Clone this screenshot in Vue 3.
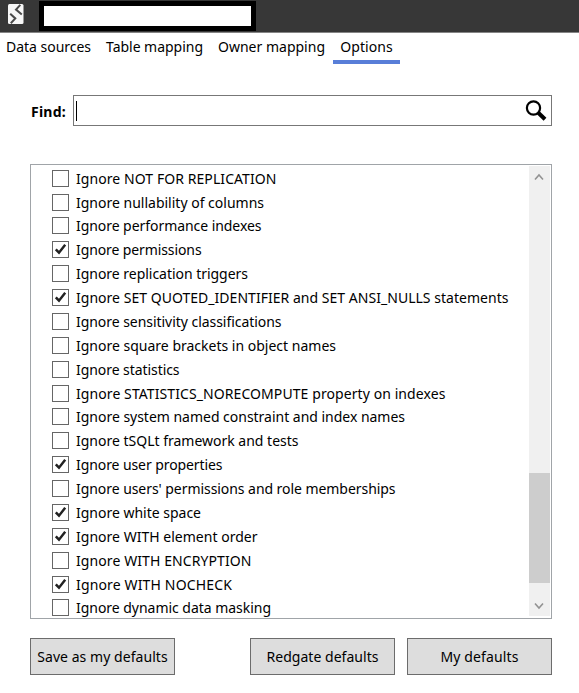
<script setup>
const tabs = [
  { label: 'Data sources', width: 85 },
  { label: 'Table mapping', width: 97 },
  { label: 'Owner mapping', width: 107 },
  { label: 'Options', width: 52.5, active: true },
]
const options = [
  { label: 'Ignore NOT FOR REPLICATION', width: 200.5 },
  { label: 'Ignore nullability of columns', width: 188 },
  { label: 'Ignore performance indexes', width: 185.5 },
  { label: 'Ignore permissions', width: 125.5, checked: true },
  { label: 'Ignore replication triggers', width: 172 },
  { label: 'Ignore SET QUOTED_IDENTIFIER and SET ANSI_NULLS statements', width: 432.5, checked: true },
  { label: 'Ignore sensitivity classifications', width: 205.5 },
  { label: 'Ignore square brackets in object names', width: 260 },
  { label: 'Ignore statistics', width: 103.5 },
  { label: 'Ignore STATISTICS_NORECOMPUTE property on indexes', width: 369.5 },
  { label: 'Ignore system named constraint and index names', width: 329 },
  { label: 'Ignore tSQLt framework and tests', width: 222.5 },
  { label: 'Ignore user properties', width: 146.5, checked: true },
  { label: "Ignore users' permissions and role memberships", width: 319.5 },
  { label: 'Ignore white space', width: 125, checked: true },
  { label: 'Ignore WITH element order', width: 181.5, checked: true },
  { label: 'Ignore WITH ENCRYPTION', width: 175.5 },
  { label: 'Ignore WITH NOCHECK', width: 156, checked: true },
  { label: 'Ignore dynamic data masking', width: 195 },
]
// Tracks a label out or in so that it fills its intended width.
const vFit = {
  mounted(el, { value }) {
    const natural = el.getBoundingClientRect().width
    el.style.letterSpacing = `${(value - natural) / el.textContent.length}px`
  },
}
</script>

<template>
  <div class="window">
    <header class="titlebar">
      <svg class="logo" width="16" height="21" viewBox="0 0 16 21">
        <rect width="15.5" height="20" rx="1.5" fill="#f7f7f7" />
        <path d="M12.3 0.8 L8 5.6 L13.8 10.6 M2.2 9.8 L7.3 14.4 L2.8 19.2" fill="none" stroke="#4a4a4a" stroke-width="2" />
      </svg>
      <div class="title"></div>
    </header>
    <nav class="tabs">
      <a v-for="t in tabs" :key="t.label" class="tab" :class="{ active: t.active }"><span v-fit="t.width" class="text">{{ t.label }}</span></a>
    </nav>
    <div class="find">
      <label class="find-label"><span v-fit="35" class="text">Find:</span></label>
      <div class="field">
        <i class="caret"></i>
        <svg width="22" height="22" viewBox="0 0 22 22" fill="none" stroke="#000">
          <circle cx="8.5" cy="8" r="6.6" stroke-width="2.2" />
          <path d="M13 12.5 L20 19.3" stroke-width="4" />
        </svg>
      </div>
    </div>
    <div class="list">
      <div class="rows">
        <div v-for="o in options" :key="o.label" class="row">
          <span class="box">
            <svg v-if="o.checked" width="15" height="15" viewBox="0 0 15 15"><path d="M2.8 7.3 L6 10.7 L12.2 2.8" fill="none" stroke="#222" stroke-width="2.5" /></svg>
          </span>
          <span v-fit="o.width" class="text">{{ o.label }}</span>
        </div>
      </div>
      <div class="scrollbar">
        <svg class="arrow" width="10" height="8" viewBox="0 0 10 8"><path d="M1 6.5 L5 2 L9 6.5" /></svg>
        <div class="thumb"></div>
        <svg class="arrow" width="10" height="8" viewBox="0 0 10 8"><path d="M1 1.5 L5 6 L9 1.5" /></svg>
      </div>
    </div>
    <footer class="buttons">
      <button class="save"><span v-fit="130.5" class="text">Save as my defaults</span></button>
      <button><span v-fit="112" class="text">Redgate defaults</span></button>
      <button><span v-fit="78" class="text">My defaults</span></button>
    </footer>
  </div>
</template>

<style>
body { margin: 0; background: #fff; }
</style>

<style scoped>
* { box-sizing: border-box; }
.window { width: 579px; height: 693px; overflow: hidden; background: #fff; color: #000; font: 14px/20px "Noto Sans", sans-serif; }
.text { display: inline-block; white-space: pre; }
.titlebar { display: flex; height: 33px; background: #373737; border-bottom: 1px solid #858585; padding: 1px 0 0 8px; }
.logo { margin-top: 3px; }
.title { width: 217px; height: 30px; margin-left: 15px; border: 5px solid #000; background: #fff; }
.tabs { display: flex; height: 31px; padding-left: 6px; gap: 15px; }
.tab { display: flex; justify-content: center; padding: 4px 0 0; height: 31px; }
.tab.active { width: 67px; margin-left: -7px; border-bottom: 4px solid #587ed8; }
.find { display: flex; align-items: center; margin: 31px 27px 0 30px; height: 31px; }
.find-label { width: 43px; font-weight: 700; padding: 2px 0 0 1px; }
.field { flex: 1; display: flex; align-items: center; justify-content: space-between; height: 31px; border: 1px solid #777; padding: 0 4px 0 2px; }
.caret { width: 1px; height: 20px; background: #000; }
.list { display: flex; justify-content: space-between; width: 522px; height: 455px; margin: 38px 0 0 30px; border: 1px solid #a0a4a8; padding: 1px 1px 2px 21px; overflow: hidden; }
.rows { padding-top: 0.2px; }
.row { display: flex; align-items: center; height: 23.88px; gap: 7px; }
.row .text { margin-top: 1px; }
.box { width: 17px; height: 17px; flex: none; display: flex; border: 1px solid #666; background: #fff; }
.scrollbar { width: 21px; display: flex; flex-direction: column; align-items: center; background: #f0f0f0; padding: 7px 0 6px; }
.arrow { flex: none; margin-right: 1px; }
.arrow path { fill: none; stroke: #929292; stroke-width: 1.6; }
.thumb { width: 21px; height: 110px; background: #cdcdcd; margin: 292px 0 auto; }
.buttons { display: flex; margin: 19px 0 0 30px; gap: 12px; }
button { width: 145px; height: 37px; padding: 0; border: 1px solid #6c6c6c; border-radius: 0; background: #ddd; font: inherit; color: inherit; }
.save { margin-right: 63px; }
</style>
